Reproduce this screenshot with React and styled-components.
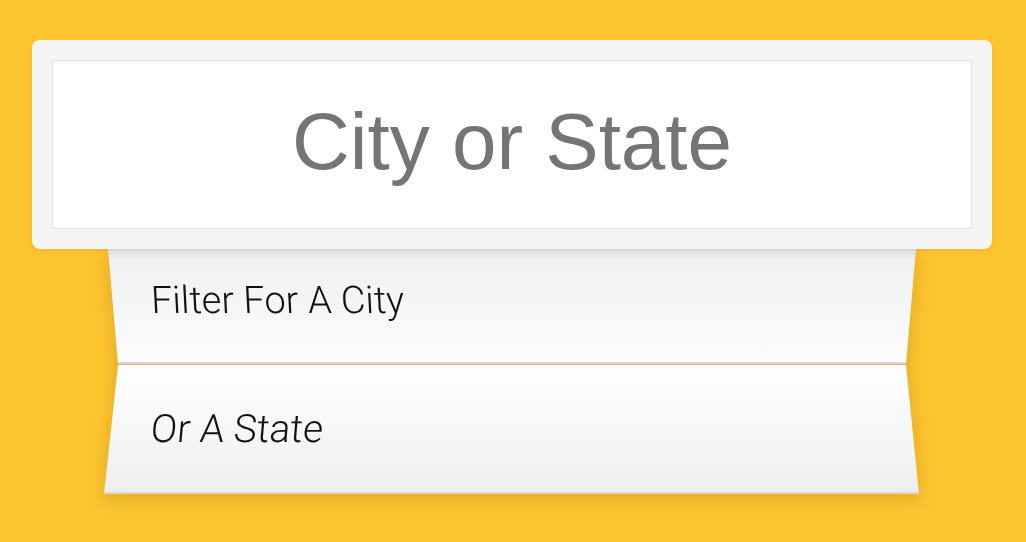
import React from "react";
import styled, { createGlobalStyle } from "styled-components";

const GlobalStyle = createGlobalStyle`
  html, body {
    margin: 0;
    padding: 0;
    background: #fcc530;
  }
  body {
    font-family: "Liberation Sans", Arial, sans-serif;
  }
`;

const Page = styled.div`
  width: 1026px;
  height: 542px;
  overflow: hidden;
  padding-top: 40px;
  box-sizing: border-box;
  display: flex;
  flex-direction: column;
  align-items: center;
`;

const SearchPanel = styled.div`
  position: relative;
  z-index: 2;
  width: 960px;
  height: 209px;
  box-sizing: border-box;
  padding: 20px;
  margin-left: -2px;
  background: #f5f5f5;
  border-radius: 8px;
  box-shadow: 0 2px 4px rgba(120, 80, 0, 0.12);
`;

const SearchBox = styled.div`
  height: 100%;
  box-sizing: border-box;
  background: #fff;
  border: 1px solid #e6e6e6;
  box-shadow: inset 0 1px 3px rgba(0, 0, 0, 0.06);
  display: flex;
  align-items: center;
  justify-content: center;
  font-family: "Liberation Sans", Arial, sans-serif;
  font-size: 80px;
  color: #757575;
  padding-bottom: 6px;
`;

const Fold = styled.div`
  width: 815px;
  margin-left: -3px;
  display: flex;
  flex-direction: column;
  filter: drop-shadow(0 4px 10px rgba(150, 90, 0, 0.28));
`;

const Row = styled.div`
  height: ${(p) => p.$height}px;
  box-sizing: border-box;
  display: flex;
  align-items: center;
  padding-left: 47px;
  padding-bottom: ${(p) => p.$lift}px;
  clip-path: polygon(${(p) => p.$shape});
  background: ${(p) => p.$bg};
  border-bottom: 2px solid ${(p) => p.$edge};
  font-family: "Roboto", "Liberation Sans", sans-serif;
  font-weight: 300;
  font-size: ${(p) => p.$size}px;
  color: #111;
`;

const Label = styled.span`
  display: inline-block;
  transform: skewX(${(p) => p.$skew}deg);
`;

const Seam = styled.div`
  height: 1px;
  margin: 0 13px;
  background: #d9b55a;
`;

export default function App() {
  return (
    <Page>
      <GlobalStyle />
      <SearchPanel>
        <SearchBox>City or State</SearchBox>
      </SearchPanel>
      <Fold>
        <Row
          $height={115}
          $lift={12}
          $size={38}
          $shape="4px 0, 812px 0, 802px 100%, 14px 100%"
          $bg="linear-gradient(to bottom, #e4e4e4 0px, #f1f1f1 12px, #f6f6f6 50%, #fcfcfc 100%)"
          $edge="#d6d6d6"
        >
          <Label $skew={3}>Filter For A City</Label>
        </Row>
        <Seam />
        <Row
          $height={129}
          $lift={0}
          $size={39}
          $shape="14px 0, 802px 0, 815px 100%, 0 100%"
          $bg="linear-gradient(to bottom, #ffffff 0%, #f7f7f7 50%, #eeeeee 100%)"
          $edge="#dadada"
        >
          <Label $skew={-5}>Or A State</Label>
        </Row>
      </Fold>
    </Page>
  );
}
